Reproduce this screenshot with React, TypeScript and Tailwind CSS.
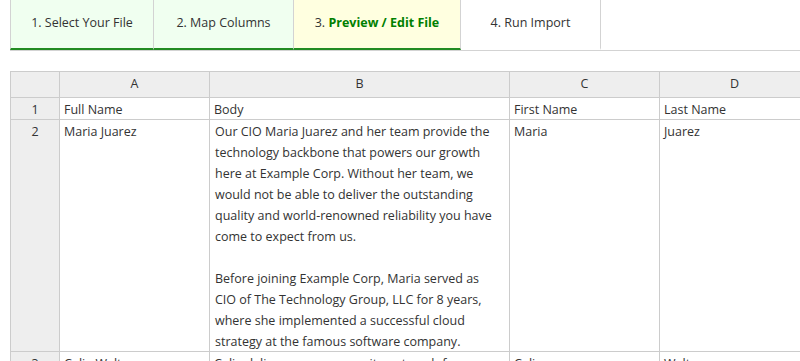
const steps = [
	{ label: "1. Select Your File", width: "w-[144px] border-l", bg: "bg-[#f0fff0]", done: true },
	{ label: "2. Map Columns", width: "w-[140px]", bg: "bg-[#f0fff0]", done: true },
	{ label: "3.", strong: "Preview / Edit File", width: "w-[167px]", bg: "bg-[#ffffe0]", done: true },
	{ label: "4. Run Import", width: "w-[140px]", bg: "bg-white", done: false },
];

const body = [
	"Our CIO Maria Juarez and her team provide the",
	"technology backbone that powers our growth",
	"here at Example Corp. Without her team, we",
	"would not be able to deliver the outstanding",
	"quality and world-renowned reliability you have",
	"come to expect from us.",
	"",
	"Before joining Example Corp, Maria served as",
	"CIO of The Technology Group, LLC for 8 years,",
	"where she implemented a successful cloud",
	"strategy at the famous software company.",
];

function Cell({ children, head }: { children?: React.ReactNode; head?: boolean }) {
	return (
		<div
			className={
				"border-r border-b border-[#cccccc] leading-[21px] whitespace-nowrap overflow-hidden " +
				(head ? "bg-[#eeeeee] text-center" : "bg-white px-[4px]")
			}
		>
			<div className="relative top-[1px]">{children}</div>
		</div>
	);
}

export default function App() {
	return (
		<div
			className="w-[800px] h-[361px] overflow-hidden bg-white text-[#333333] text-[12.5px]"
			style={{ fontFamily: '"Open Sans", "Segoe UI", sans-serif' }}
		>
			<div className="ml-[10px] flex border-b border-[#d3d3d3]">
				{steps.map((s) => (
					<div
						key={s.label}
						className={
							"h-[50px] flex items-center justify-center border-r border-[#d3d3d3] border-b-2 " +
							s.width +
							" " +
							s.bg +
							(s.done ? " border-b-[#228b22]" : " border-b-white")
						}
					>
						<span className="-mt-[2px]">
							{s.label}
							{s.strong && <b className="text-[#008000] font-bold"> {s.strong}</b>}
						</span>
					</div>
				))}
			</div>

			<div className="mt-[20px] ml-[10px] w-[800px] grid grid-cols-[49px_150px_300px_150px_150px] border-l border-t border-[#cccccc]">
				<div className="h-[26px] bg-[#eeeeee] border-r border-b border-[#cccccc]" />
				{["A", "B", "C", "D"].map((c) => (
					<div
						key={c}
						className="h-[26px] flex items-center justify-center bg-[#eeeeee] border-r border-b border-[#cccccc]"
					>
						{c}
					</div>
				))}

				<Cell head>1</Cell>
				<Cell>Full Name</Cell>
				<Cell>Body</Cell>
				<Cell>First Name</Cell>
				<Cell>Last Name</Cell>

				<Cell head>2</Cell>
				<Cell>Maria Juarez</Cell>
				<Cell>
					{body.map((line, i) => (
						<div key={i} className="h-[21px] pl-[1px]">
							{line}
						</div>
					))}
				</Cell>
				<Cell>Maria</Cell>
				<Cell>Juarez</Cell>

				<Cell head>3</Cell>
				<Cell>Celia Walton</Cell>
				<Cell>Celia delivers our community outreach for</Cell>
				<Cell>Celia</Cell>
				<Cell>Walton</Cell>
			</div>
		</div>
	);
}
